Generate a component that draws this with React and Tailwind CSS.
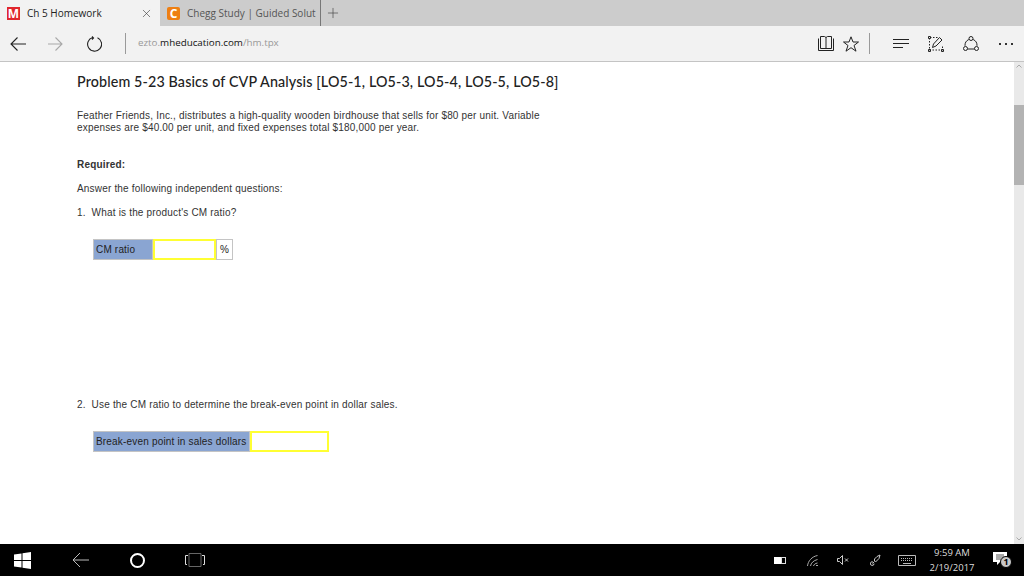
import { Plus, X } from "lucide-react";

function TopBar() {
  return (
    <div className="h-[26px] flex bg-[#cccccc] font-['Open_Sans',sans-serif] text-[10px]">
      <div className="w-[160px] bg-[#f2f2f2] flex items-center pl-[7px] pr-[7px]">
        <div className="w-[13px] h-[13px] bg-[#e0262c] text-white text-[12px] font-bold leading-[13px] text-center">M</div>
        <span className="ml-[7px] text-[#222222]">Ch 5 Homework</span>
        <X className="ml-auto w-[13px] h-[13px] text-[#333333]" strokeWidth={1.1} />
      </div>
      <div className="w-[161px] flex items-center pl-[7px] border-r border-[#777777]">
        <div className="w-[13px] h-[13px] rounded-[2px] bg-[#ee7f12] text-white text-[12px] font-bold leading-[13px] text-center">C</div>
        <span className="ml-[7px] text-[#555555] whitespace-nowrap">Chegg Study | Guided Solut</span>
      </div>
      <div className="w-[24px] flex items-center justify-center">
        <Plus className="w-[16px] h-[16px] text-[#444444]" strokeWidth={1} />
      </div>
    </div>
  );
}

function NavBar() {
  return (
    <div className="h-[36px] bg-[#f2f2f2] border-b border-[#c4c4c4] flex items-center font-['Open_Sans',sans-serif]">
      <svg className="ml-[10px]" width="16" height="14" viewBox="0 0 16 14" fill="none" stroke="#222" strokeWidth="1.1">
        <path d="M16 7H1M7.500.500 1 7l6.500 6.500" />
      </svg>
      <svg className="ml-[22px]" width="15" height="14" viewBox="0 0 15 14" fill="none" stroke="#a8a8a8" strokeWidth="1.1">
        <path d="M0 7h14M7.500.500 14 7l-6.500 6.500" />
      </svg>
      <svg className="ml-[24px]" width="15" height="16" viewBox="0 0 15 16" fill="none" stroke="#222" strokeWidth="1.1">
        <path d="M10.500 1.800A7 7 0 1 1 5.500 1.500M5 .500l1.500 1.500-1.500 1.500" />
      </svg>
      <div className="ml-[23px] w-px h-[21px] bg-[#9a9a9a]" />
      <div className="ml-[12px] text-[9.800px] text-[#999999]">
        ezto.<span className="text-[#111111]">mheducation.com</span>/hm.tpx
      </div>
      <svg className="ml-auto" width="16" height="15" viewBox="0 0 16 15" fill="none" stroke="#222" strokeWidth="1">
        <path d="M2.500.500h4l1.500 1 1.500-1h4v12h-11zM8 1.500v11M.5 2.500v12h15v-12" />
      </svg>
      <svg className="ml-[9px]" width="16" height="16" viewBox="0 0 16 16" fill="none" stroke="#222" strokeWidth="1">
        <path d="M8 .800 10 6h5.500L11 9.500l2 5.700-5-3.500-5 3.500 2-5.700L.500 6H6z" />
      </svg>
      <div className="ml-[10px] w-px h-[21px] bg-[#9a9a9a]" />
      <svg className="ml-[23px]" width="17" height="11" viewBox="0 0 17 11" stroke="#222" strokeWidth="1">
        <path d="M0 1.500h16M0 5.500h16M0 9.500h10" />
      </svg>
      <svg className="ml-[18px]" width="16" height="16" viewBox="0 0 16 16" fill="none" stroke="#222" strokeWidth="1">
        <path d="M1.500 2v12h13V9M2 1.500h8" strokeDasharray="1.5 1.5" />
        <path d="M4.500 11.500l1-3.500 6-6.500 2.500 2.500-6 6z" />
        <path d="M.5.5h2v2h-2zM.5 13.500h2v2h-2zM13.500 13.500h2v2h-2z" />
      </svg>
      <svg className="ml-[19px]" width="16" height="16" viewBox="0 0 16 16" fill="none" stroke="#222" strokeWidth="1">
        <path d="M5.800 3.500A6.500 6.500 0 0 0 2 9.800M10.200 3.500A6.500 6.500 0 0 1 14 9.800M4.500 13h7" />
        <circle cx="8" cy="2.500" r="2" />
        <circle cx="2.500" cy="12.500" r="2" />
        <circle cx="13.500" cy="12.500" r="2" />
      </svg>
      <div className="ml-[20px] mr-[11px] flex gap-[4px]">
        <div className="w-[2px] h-[2px] bg-[#333333]" />
        <div className="w-[2px] h-[2px] bg-[#333333]" />
        <div className="w-[2px] h-[2px] bg-[#333333]" />
      </div>
    </div>
  );
}

function Field({ label, labelWidth, inputWidth, unit }) {
  return (
    <div className="flex h-[21px] text-[10px] leading-[19px] text-[#222222]">
      <div className="border border-[#c4c4c4] bg-[#8aa5d2] pl-[2px]" style={{ width: labelWidth }}>{label}</div>
      <div className="border-2 border-[#ffff33] bg-white" style={{ width: inputWidth }} />
      {unit && <div className="w-[17px] border border-[#c4c4c4] text-center">{unit}</div>}
    </div>
  );
}

function Content() {
  return (
    <div className="flex-1 flex bg-white overflow-hidden">
      <div className="flex-1 pl-[77px] text-[10px] leading-[11.500px] text-[#333333] font-['Liberation_Sans',sans-serif] tracking-[0.18px]">
        <h1 className="mt-[11px] text-[14.3px] leading-[17px] text-[#222222] font-['Lato',sans-serif] font-medium tracking-[0.13px]">
          Problem 5-23 Basics of CVP Analysis [LO5-1, LO5-3, LO5-4, LO5-5, LO5-8]
        </h1>
        <p className="mt-[20px] w-[480px]">
          Feather Friends, Inc., distributes a high-quality wooden birdhouse that sells for $80 per unit. Variable expenses are $40.00 per unit, and fixed expenses total $180,000 per year.
        </p>
        <p className="mt-[26px] font-bold">Required:</p>
        <p className="mt-[12.500px]">Answer the following independent questions:</p>
        <p className="mt-[12.500px]">1.&nbsp;&nbsp;What is the product's CM ratio?</p>
        <div className="mt-[20px] ml-[16px]">
          <Field label="CM ratio" labelWidth={60} inputWidth={63} unit="%" />
        </div>
        <p className="mt-[139px]">2.&nbsp;&nbsp;Use the CM ratio to determine the break-even point in dollar sales.</p>
        <div className="mt-[21px] ml-[16px]">
          <Field label="Break-even point in sales dollars" labelWidth={157} inputWidth={79} />
        </div>
      </div>
      <div className="w-[10px] bg-[#e9e9e9] flex flex-col">
        <div className="h-[43px] pt-[2px] flex justify-center">
          <svg width="6" height="4" viewBox="0 0 6 4" fill="none" stroke="#aaa" strokeWidth="1"><path d="M.5 3.500 3 1l2.500 2.500" /></svg>
        </div>
        <div className="h-[80px] bg-[#b3b3b3]" />
        <div className="mt-auto pb-[3px] flex justify-center">
          <svg width="6" height="4" viewBox="0 0 6 4" fill="none" stroke="#aaa" strokeWidth="1"><path d="M.5.500 3 3 5.500.500" /></svg>
        </div>
      </div>
    </div>
  );
}

function Taskbar() {
  return (
    <div className="h-[32px] bg-black flex items-center text-white font-['Open_Sans',sans-serif]">
      <svg className="ml-[14px]" width="17" height="17" viewBox="0 0 17 17" fill="white">
        <path d="M0 2.500 7.500 1.400V8H0zM8.500 1.200 17 0v8H8.500zM0 9h7.500v6.600L0 14.500zM8.500 9H17v8l-8.500-1.200z" />
      </svg>
      <svg className="ml-[41px]" width="17" height="16" viewBox="0 0 17 16" fill="none" stroke="#bbb" strokeWidth="1">
        <path d="M17 8H1M8 1 1 8l7 7" />
      </svg>
      <div className="ml-[41px] w-[15px] h-[15px] rounded-full border-2 border-white" />
      <svg className="ml-[40px]" width="20" height="14" viewBox="0 0 20 14" fill="none" strokeWidth="1">
        <path d="M3 2.500H.5v9H2M17 2.500h2.500v9H18" stroke="#ddd" />
        <path d="M4 .5h12v13H4z" stroke="#666" />
      </svg>
      <svg className="ml-[569px]" width="12" height="7" viewBox="0 0 12 7">
        <path d="M0 0h12v7H0z" fill="#ddd" />
        <path d="M0 0h7v7H0z" fill="#fff" />
        <path d="M8 1h3v5H8z" fill="#000" />
      </svg>
      <svg className="ml-[21px]" width="11" height="11" viewBox="0 0 11 11" fill="none" stroke="#aaa" strokeWidth="1">
        <path d="M.5 11C1 6 5 1.500 10.500.500M3.500 11c.5-3 3-5.500 7-6.500M6.500 11c.5-1.500 1.500-2.500 4-3M9 10.500h2" />
      </svg>
      <svg className="ml-[19px]" width="12" height="10" viewBox="0 0 12 10" fill="none" stroke="#ccc" strokeWidth="1">
        <path d="M.5 3.500h2l3-3v9l-3-3h-2zM8 3.500l3 3M11 3.500l-3 3" />
      </svg>
      <svg className="ml-[21px]" width="11" height="12" viewBox="0 0 11 12" fill="none" stroke="#ccc" strokeWidth="1">
        <path d="M4 8l-1.500 1.500M3 8a1.800 1.800 0 1 0 1 1.500M4.500 7l1 1 3.500-3.500L10 1 7 2.500 4.500 5z" />
      </svg>
      <svg className="ml-[17px]" width="18" height="11" viewBox="0 0 18 11" fill="none" stroke="#bbb" strokeWidth="1">
        <path d="M.5.500h17v10H.5z" />
        <path d="M3 3.500h12M3 5.500h12" strokeDasharray="1 1" />
        <path d="M5 8.500h8" />
      </svg>
      <div className="ml-[9px] w-[54px] text-center text-[9.500px] leading-[15px] text-[#dddddd]">
        <div>9:59 AM</div>
        <div>2/19/2017</div>
      </div>
      <div className="relative ml-[14px] w-[14px] h-[16px]">
        <svg width="14" height="14" viewBox="0 0 14 14" fill="white">
          <path d="M0 0h14v10H7l-3 3v-3H0z" />
          <path d="M3 3h8M3 5h8M3 7h5" stroke="#555" strokeWidth="1" />
        </svg>
        <div className="absolute left-[7px] top-[4px] w-[12px] h-[12px] rounded-full bg-[#c8c8c8] border border-black text-black text-[9px] font-bold leading-[10px] text-center">1</div>
      </div>
    </div>
  );
}

export default function App() {
  return (
    <div className="w-[1024px] h-[576px] flex flex-col overflow-hidden">
      <TopBar />
      <NavBar />
      <Content />
      <Taskbar />
    </div>
  );
}
